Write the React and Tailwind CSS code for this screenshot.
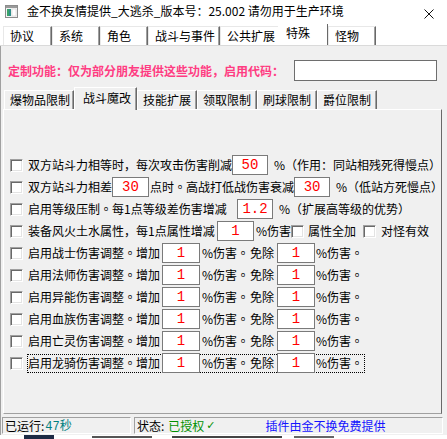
import { Fragment } from 'react'

const TOP_TABS = [
  { label: '协议', w: 'w-[49px]' },
  { label: '系统', w: 'w-[48px]' },
  { label: '角色', w: 'w-[48px]' },
  { label: '战斗与事件', w: 'w-[72px]' },
  { label: '公共扩展', w: 'w-[60px]' },
  { label: '特殊', w: 'w-[50px]', active: true },
  { label: '怪物', w: 'w-[48px]' },
]

const SUB_TABS = [
  { label: '爆物品限制', w: 'w-[70px]' },
  { label: '战斗魔改', w: 'w-[63px]', active: true },
  { label: '技能扩展', w: 'w-[60px]' },
  { label: '领取限制', w: 'w-[60px]' },
  { label: '刷球限制', w: 'w-[60px]' },
  { label: '爵位限制', w: 'w-[60px]' },
]

const CLASS_ROWS = ['战士', '法师', '异能', '血族', '亡灵', '龙骑']

// centered full stop, like the old bitmap font draws it
function Dot() {
  return <span className="font-['Noto_Sans_CJK_TC',sans-serif]">。</span>
}

function Check() {
  return (
    <span className="box-border inline-block h-[13px] w-[13px] shrink-0 border border-t-[#a0a0a0] border-l-[#a0a0a0] border-r-white border-b-white bg-white shadow-[inset_1px_1px_0_#696969,inset_-1px_-1px_0_#e3e3e3]" />
  )
}

function Num({ value, w = 'w-[36px]' }) {
  return (
    <span
      className={`relative flex h-[20px] ${w} shrink-0 items-center justify-center border border-[#7a7a7a] bg-white font-['Liberation_Mono',monospace] text-[14px] leading-none text-[#ff0000]`}
    >
      {value}
    </span>
  )
}

function Row({ children }) {
  return (
    <div className="flex h-[22px] items-center whitespace-nowrap">
      <Check />
      {children}
    </div>
  )
}

function AppIcon() {
  return (
    <svg width="13" height="13" viewBox="0 0 13 13" className="shrink-0">
      <rect x="0.5" y="0.5" width="12" height="12" fill="#f4f4f4" stroke="#8c8c8c" />
      <rect x="1" y="1" width="11" height="2" fill="#9a9a9a" />
      <rect x="2" y="4" width="4" height="7" fill="#2f8f8a" />
      <rect x="2" y="4" width="2" height="7" fill="#3aa36a" />
      <rect x="7" y="4" width="4" height="7" fill="#ffffff" stroke="#c8c8c8" strokeWidth="0.5" />
    </svg>
  )
}

function CloseIcon() {
  return (
    <svg width="10" height="10" viewBox="0 0 10 10" className="shrink-0">
      <path d="M0.5 0.5 L9.5 9.5 M9.5 0.5 L0.5 9.5" stroke="#111" strokeWidth="1" />
    </svg>
  )
}

function ClassRow({ name, focused }) {
  const body = (
    <>
      <span className="w-[134px]">
        启用{name}伤害调整<Dot />增加
      </span>
      <Num value="1" w="w-[38px]" />
      <span className="ml-[2px] w-[48px]">
        %伤害<Dot />
      </span>
      <span className="w-[27px]">免除</span>
      <Num value="1" w="w-[38px]" />
      <span className="ml-px">
        %伤害<Dot />
      </span>
    </>
  )
  return (
    <Row>
      {focused ? (
        <div className="ml-[4px] flex h-[19px] items-center border border-dotted border-black pr-px">{body}</div>
      ) : (
        <div className="ml-[5px] flex items-center">{body}</div>
      )}
    </Row>
  )
}

export default function App() {
  return (
    <div className="relative flex h-[439px] w-[447px] flex-col overflow-hidden bg-[#f0f0f0] font-['Noto_Sans_CJK_SC',sans-serif] text-[12px] leading-none text-black">
      {/* title bar */}
      <div className="flex h-[22px] shrink-0 items-center bg-white pl-[5px]">
        <AppIcon />
        <span className="ml-[9px]">金不换友情提供_大逃杀_版本号：25.002 请勿用于生产环境</span>
        <span className="ml-auto mr-[13px] mt-[6px]">
          <CloseIcon />
        </span>
      </div>

      {/* main tabs */}
      <div className="flex h-[24px] shrink-0 items-end border-b border-[#dadada] bg-white pl-[3px]">
        {TOP_TABS.map((tab) =>
          tab.active ? (
            <div
              key={tab.label}
              className={`relative -ml-[2px] flex h-[21px] ${tab.w} items-center border-r border-r-[#696969] bg-white pb-[3px] pl-[8px]`}
            >
              {tab.label}
            </div>
          ) : (
            <div
              key={tab.label}
              className={`flex h-[19px] ${tab.w} items-center border-l border-t border-l-[#e8e8e8] border-t-[#e8e8e8] border-r border-r-[#696969] bg-white pl-[6px] shadow-[inset_-1px_0_0_#a0a0a0]`}
            >
              {tab.label}
            </div>
          ),
        )}
      </div>

      <div className="flex flex-1 flex-col border-l border-[#a0a0a0]">
        {/* code row */}
        <div className="mt-[14px] flex h-[21px] items-center pl-[7px]">
          <span className="font-bold text-[#ff3c82]">定制功能：仅为部分朋友提供这些功能，启用代码：</span>
          <span className="ml-auto mr-[10px] h-[21px] w-[143px] border border-[#6e6e6e] bg-white" />
        </div>

        {/* sub tabs */}
        <div className="mt-[6px] flex h-[22px] items-end pl-[3px]">
          {SUB_TABS.map((tab) =>
            tab.active ? (
              <div
                key={tab.label}
                className={`relative z-10 -mb-px flex h-[23px] ${tab.w} items-center border-l border-t border-l-white border-t-white border-r border-r-[#696969] bg-[#f0f0f0] pb-[2px] pl-[8px] shadow-[inset_-1px_0_0_#a0a0a0]`}
              >
                {tab.label}
              </div>
            ) : (
              <div
                key={tab.label}
                className={`flex h-[19px] ${tab.w} items-center border-l border-t border-l-white border-t-white border-r border-r-[#696969] bg-[#f0f0f0] pl-[5px] shadow-[inset_-1px_0_0_#a0a0a0]`}
              >
                {tab.label}
              </div>
            ),
          )}
        </div>

        {/* tab page */}
        <div className="ml-[2px] flex h-[305px] w-[439px] flex-col border border-t-white border-l-white border-r-[#696969] border-b-[#a0a0a0] pl-[6px] pt-[44px]">
          <Row>
            <span className="ml-[5px] w-[209px]">双方站斗力相等时，每次攻击伤害削减</span>
            <Num value="50" />
            <span className="ml-[6px]">%（作用：同站相残死得慢点）</span>
          </Row>
          <Row>
            <span className="ml-[5px] w-[87px]">双方站斗力相差</span>
            <Num value="30" w="w-[37px]" />
            <span className="ml-px w-[148px]">
              点时<Dot />高战打低战伤害衰减
            </span>
            <Num value="30" />
            <span className="ml-[6px]">%（低站方死慢点）</span>
          </Row>
          <Row>
            <span className="ml-[5px] w-[209px]">
              启用等级压制<Dot />每1点等级差伤害增减
            </span>
            <Num value="1.2" />
            <span className="ml-[6px]">%（扩展高等级的优势）</span>
          </Row>
          <Row>
            <span className="ml-[5px] w-[189px]">装备风火土水属性，每1点属性增减</span>
            <Num value="1" w="w-[37px]" />
            <span className="ml-[2px] w-[35px]">%伤害</span>
            <Check />
            <span className="ml-[4px] w-[55px]">属性全加</span>
            <Check />
            <span className="ml-[5px]">对怪有效</span>
          </Row>
          {CLASS_ROWS.map((name, i) => (
            <Fragment key={name}>
              <ClassRow name={name} focused={i === CLASS_ROWS.length - 1} />
            </Fragment>
          ))}
        </div>

        {/* status bar */}
        <div className="mt-[3px] flex h-[17px] gap-[3px] pl-px pr-[4px]">
          <div className="flex w-[129px] items-center border border-t-[#a0a0a0] border-l-[#a0a0a0] border-r-white border-b-white pl-[2px]">
            已运行:
            <span className="ml-px text-[#008080]">
              <span className="font-['Liberation_Mono',monospace]">47</span>秒
            </span>
          </div>
          <div className="flex flex-1 items-center border border-t-[#a0a0a0] border-l-[#a0a0a0] border-r-white border-b-white pl-[2px]">
            状态:
            <span className="ml-[4px] text-[#009000]">已授权</span>
            <span className="ml-[2px] font-['DejaVu_Sans',sans-serif] text-[11px] text-[#009000]">✓</span>
            <span className="ml-[50px] text-[#1414ff]">插件由金不换免费提供</span>
          </div>
        </div>
      </div>

      {/* window behind, peeking out */}
      <div className="flex h-[4px] shrink-0 items-start bg-white">
        <span className="ml-[24px] h-[4px] w-[30px] bg-[#1d2b45]" />
        <span className="ml-[38px] mt-[1px] h-[2px] w-[60px] bg-[#555]" />
        <span className="ml-[20px] mt-[1px] h-[2px] w-[110px] bg-[#444]" />
        <span className="ml-[12px] mt-[1px] h-[2px] w-[40px] bg-[#666]" />
      </div>
    </div>
  )
}
